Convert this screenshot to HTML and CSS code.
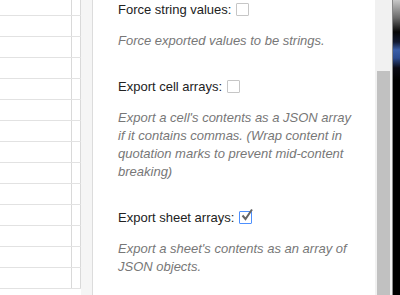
FILE: index.html
```html
<!DOCTYPE html>
<html lang="en">
<head>
    <meta charset="UTF-8">
    <meta name="viewport" content="width=device-width, initial-scale=1.0">
    <title>Export JSON - Options</title>
    <link rel="stylesheet" href="styles.css">
</head>
<body>
    <div class="screen">
        <div class="sheet">
            <div class="grid">
                <div class="row first"><div class="cell"></div><div class="cell narrow"></div></div>
                <div class="row"><div class="cell"></div><div class="cell narrow"></div></div>
                <div class="row"><div class="cell"></div><div class="cell narrow"></div></div>
                <div class="row"><div class="cell"></div><div class="cell narrow"></div></div>
                <div class="row"><div class="cell"></div><div class="cell narrow"></div></div>
                <div class="row"><div class="cell"></div><div class="cell narrow"></div></div>
                <div class="row"><div class="cell"></div><div class="cell narrow"></div></div>
                <div class="row"><div class="cell"></div><div class="cell narrow"></div></div>
                <div class="row"><div class="cell"></div><div class="cell narrow"></div></div>
                <div class="row"><div class="cell"></div><div class="cell narrow"></div></div>
                <div class="row"><div class="cell"></div><div class="cell narrow"></div></div>
                <div class="row"><div class="cell"></div><div class="cell narrow"></div></div>
                <div class="row"><div class="cell"></div><div class="cell narrow"></div></div>
                <div class="row"><div class="cell"></div><div class="cell narrow"></div></div>
            </div>
            <div class="strip"></div>
        </div>

        <div class="sidebar">
            <div class="option">
                <label class="option-label">Force string values: <span class="checkbox"></span></label>
                <p class="option-desc">Force exported values to be strings.</p>
            </div>
            <div class="option">
                <label class="option-label">Export cell arrays: <span class="checkbox"></span></label>
                <p class="option-desc">Export a cell's contents as a JSON array if it contains commas. (Wrap content in quotation marks to prevent mid-content breaking)</p>
            </div>
            <div class="option">
                <label class="option-label">Export sheet arrays: <span class="checkbox checked"><svg width="16" height="16" viewBox="0 0 16 16"><path d="M2.5 7.5 L5.5 11 L12 1.5" fill="none" stroke="#666" stroke-width="2"/></svg></span></label>
                <p class="option-desc">Export a sheet's contents as an array of JSON objects.</p>
            </div>
        </div>

        <div class="scrollbar">
            <div class="thumb"></div>
        </div>
        <div class="desktop"></div>
    </div>
</body>
</html>
```

FILE: styles.css
```css
html, body {
    margin: 0;
    padding: 0;
}
body {
    font-family: 'Liberation Sans', Arial, sans-serif;
    background-color: white;
    overflow: hidden;
}
.screen {
    display: flex;
    height: 295px;
    overflow: hidden;
}
.sheet {
    display: flex;
    flex: none;
}
.grid {
    width: 81px;
}
.row {
    display: flex;
    height: 20px;
    border-bottom: 1px solid #e2e2e2;
}
.row.first {
    height: 15px;
}
.cell {
    width: 71px;
    border-right: 1px solid #d9d9d9;
}
.cell.narrow {
    width: 8px;
}
.strip {
    width: 11px;
    background-color: #f5f5f5;
    border-right: 1px solid #dcdcdc;
}
.sidebar {
    flex: 1;
    background-color: white;
    padding: 0 20px 0 25px;
}
.option {
    margin-bottom: 27px;
}
.option-label {
    display: block;
    font-size: 13px;
    line-height: 20px;
    color: #222;
}
.checkbox {
    display: inline-block;
    position: relative;
    width: 11px;
    height: 11px;
    margin-left: 1px;
    border: 1px solid #c6c6c6;
    border-radius: 1px;
    vertical-align: -2px;
}
.checkbox.checked {
    border-color: #4d90fe;
}
.checkbox svg {
    position: absolute;
    left: 0;
    top: -4px;
}
.option-desc {
    margin: 12px 0 0;
    font-size: 13px;
    line-height: 18px;
    font-style: italic;
    color: #777;
}
.scrollbar {
    width: 17px;
    flex: none;
    background-color: #f1f1f1;
    padding-top: 71px;
    box-sizing: border-box;
}
.thumb {
    margin: 0 2px;
    height: 240px;
    background-color: #c1c1c1;
}
.desktop {
    width: 7px;
    flex: none;
    border-left: 1px solid #8a8a8a;
    background: linear-gradient(to bottom, #c8c8c8 0px, #6a6a6a 18px, #050505 32px, #101830 42px, #3a5ea8 50px, #2c4c90 58px, #0a0a14 68px, #000 80px, #000 100%);
}
```
